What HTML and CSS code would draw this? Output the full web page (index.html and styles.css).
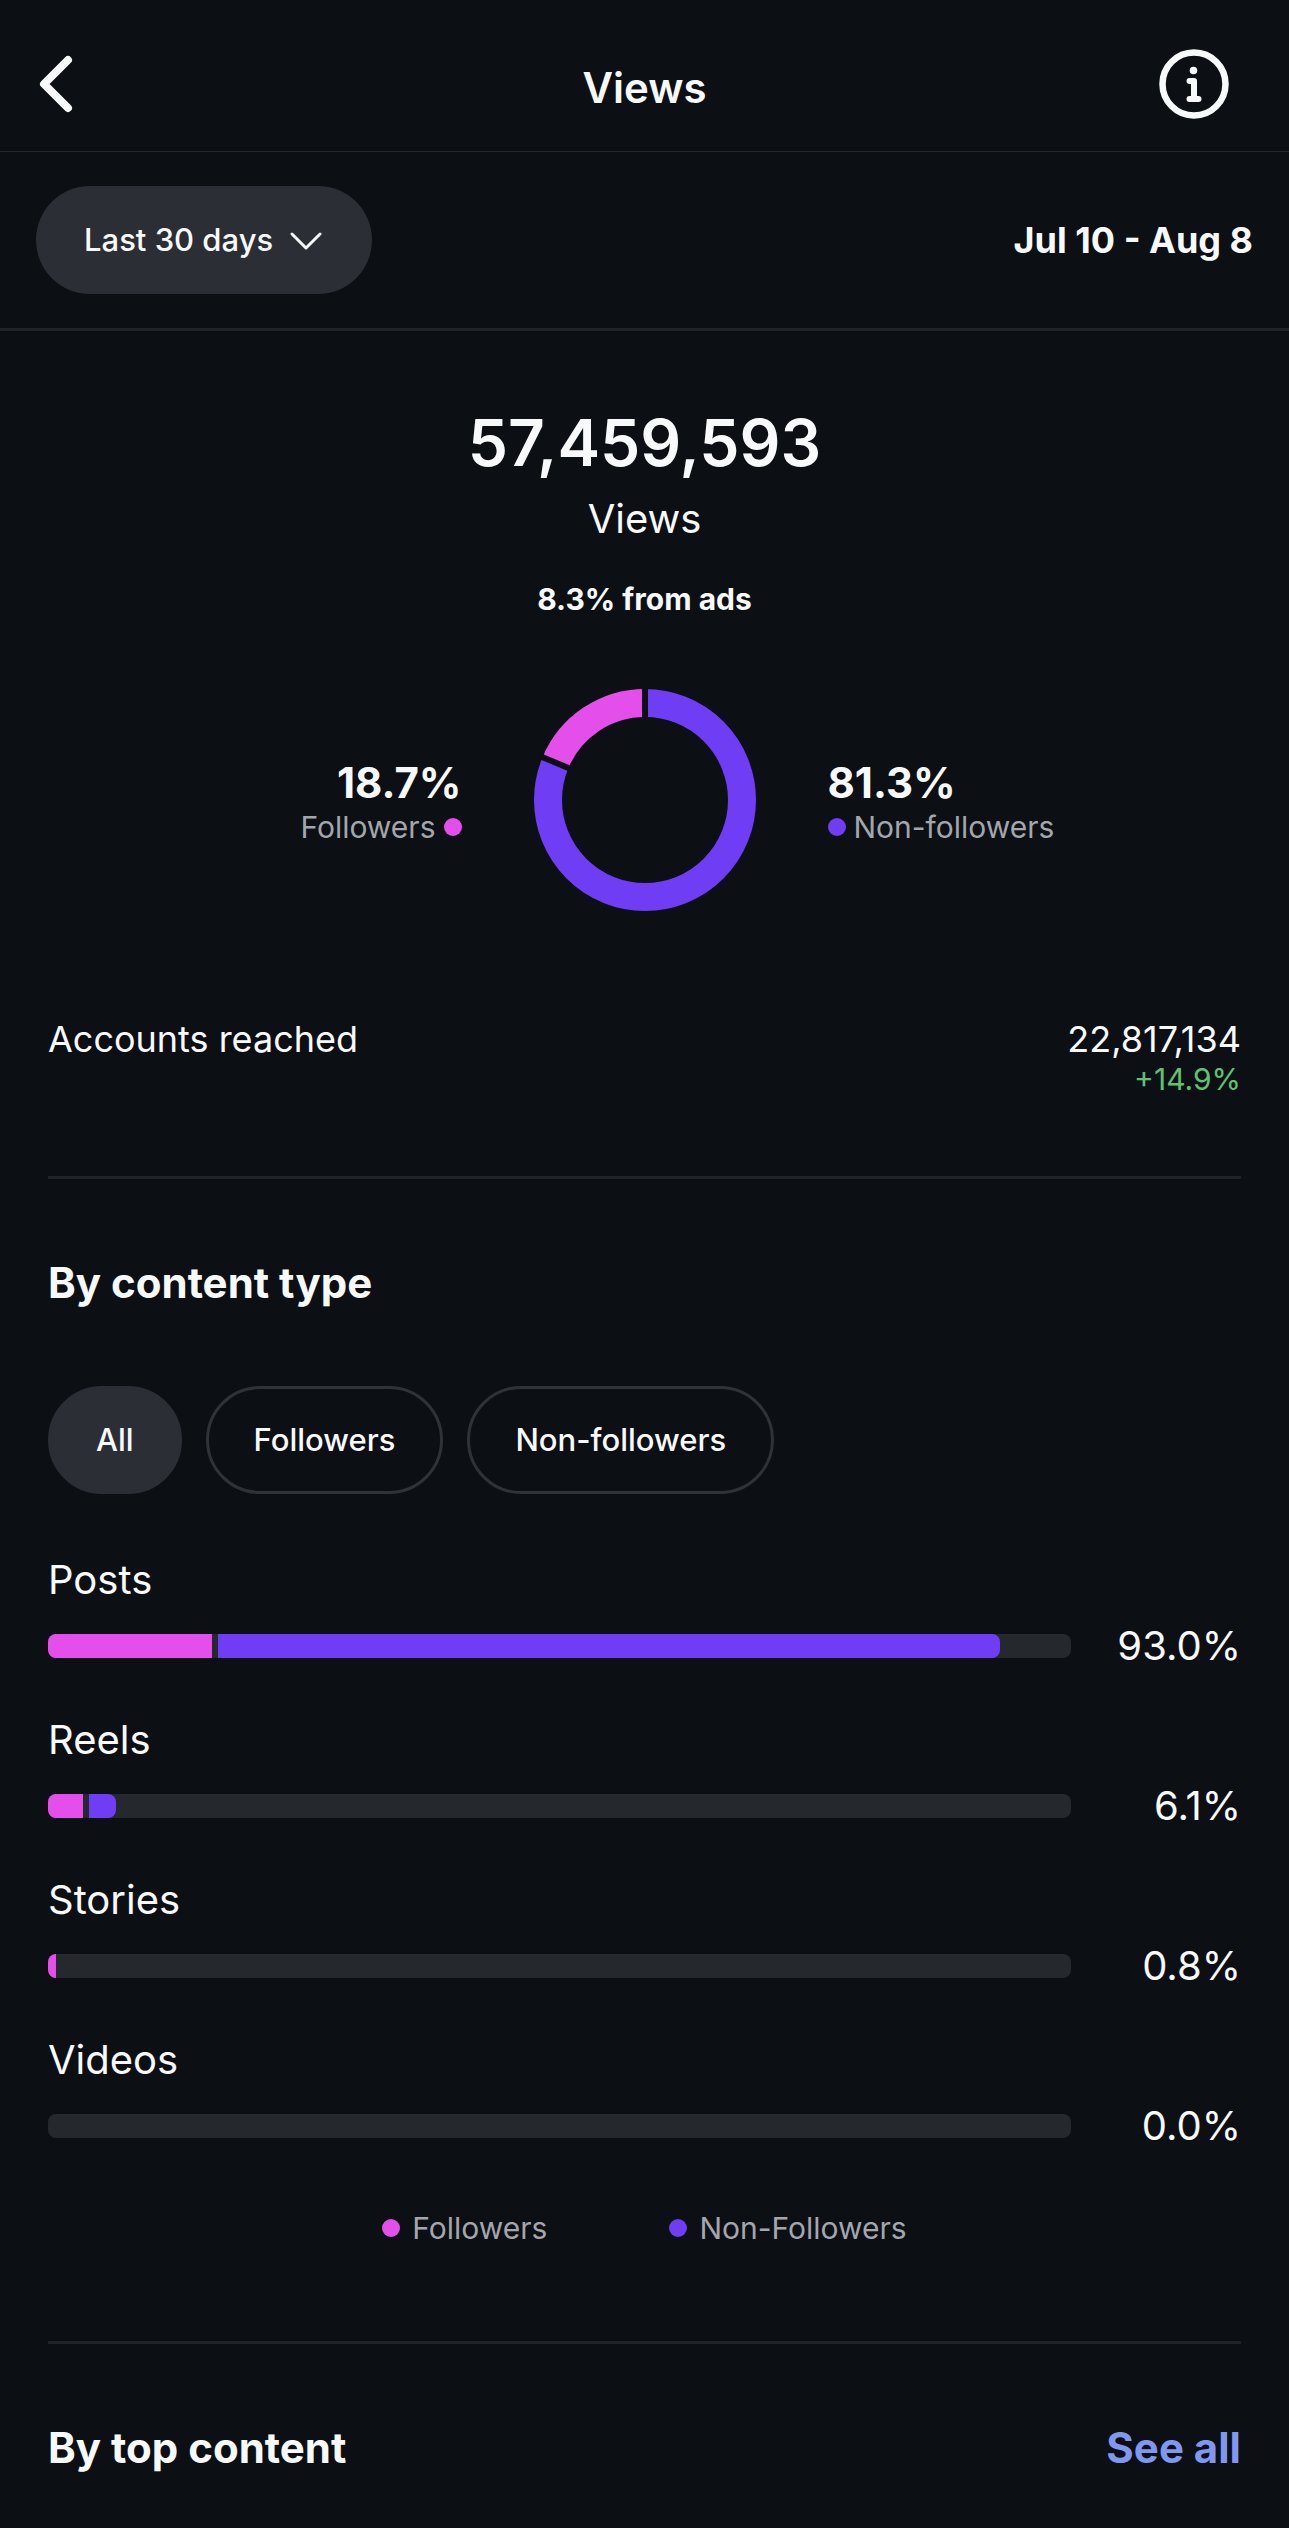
FILE: index.html
```html
<!DOCTYPE html>
<html lang="en">
<head>
  <meta charset="UTF-8">
  <title>Views</title>
  <meta name="viewport" content="width=device-width, initial-scale=1">
  <link rel="stylesheet" href="styles.css">
</head>
<body>
  <header class="topbar">
    <button class="icon-btn back" aria-label="Back">
      <svg width="34" height="58" viewBox="0 0 34 58" fill="none" stroke="currentColor" stroke-width="8" stroke-linecap="round" stroke-linejoin="round"><path d="M29 5 5 29l24 24"/></svg>
    </button>
    <h1>Views</h1>
    <button class="icon-btn info" aria-label="Info">
      <svg width="70" height="70" viewBox="0 0 70 70" fill="none" stroke="currentColor" stroke-linecap="round" stroke-linejoin="round">
        <circle cx="35" cy="35" r="31.5" stroke-width="6.5"/>
        <circle cx="34.500" cy="21.500" r="3.800" fill="currentColor" stroke="none"/>
        <path d="M30.500 32H35v18M30.500 50h9" stroke-width="6"/>
      </svg>
    </button>
  </header>

  <div class="filters">
    <div class="period">
      <select aria-label="Period">
        <option>Last 30 days</option>
        <option>Last 7 days</option>
      </select>
      <svg class="chevron" width="32" height="18" viewBox="0 0 32 18" fill="none" stroke="currentColor" stroke-width="3" stroke-linecap="round" stroke-linejoin="round"><path d="m2 2 14 14L30 2"/></svg>
    </div>
    <p class="range">Jul 10 - Aug 8</p>
  </div>

  <main>
    <section class="summary">
      <p class="total">57,459,593</p>
      <p class="total-label">Views</p>
      <p class="ads">8.3% from ads</p>

      <div class="split">
        <div class="share share-left">
          <p class="share-value">18.7%</p>
          <p class="share-label">Followers <span class="dot pink"></span></p>
        </div>
        <!-- ring is 100 units long, followers take the last 18.7 -->
        <svg class="donut" width="222" height="222" viewBox="0 0 222 222" fill="none">
          <g transform="rotate(-90 111 111)" stroke-width="28">
            <circle cx="111" cy="111" r="97" stroke="#6f3df4" pathLength="100" stroke-dasharray="81.3 100"/>
            <circle cx="111" cy="111" r="97" stroke="#e44eea" pathLength="100" stroke-dasharray="18.7 100" stroke-dashoffset="-81.3"/>
          </g>
          <g stroke="#0c0f14">
            <path d="M111 111V-2" stroke-width="6"/>
            <path d="M111 111V-2" stroke-width="6" transform="rotate(-67.300 111 111)"/>
          </g>
        </svg>
        <div class="share">
          <p class="share-value">81.3%</p>
          <p class="share-label"><span class="dot purple"></span> Non-followers</p>
        </div>
      </div>

      <div class="reached">
        <p>Accounts reached</p>
        <div class="reached-value">
          <p>22,817,134</p>
          <p class="growth">+14.9%</p>
        </div>
      </div>
    </section>

    <section class="content-type">
      <h2>By content type</h2>
      <div class="chips">
        <button class="chip active">All</button>
        <button class="chip">Followers</button>
        <button class="chip">Non-followers</button>
      </div>

      <ul class="bars">
        <li>
          <h3>Posts</h3>
          <div class="bar-row">
            <div class="bar">
              <span class="pink" style="width: 16%"></span>
              <span class="purple" style="width: 76.5%"></span>
            </div>
            <p>93.0%</p>
          </div>
        </li>
        <li>
          <h3>Reels</h3>
          <div class="bar-row">
            <div class="bar">
              <span class="pink" style="width: 3.4%"></span>
              <span class="purple" style="width: 2.7%"></span>
            </div>
            <p>6.1%</p>
          </div>
        </li>
        <li>
          <h3>Stories</h3>
          <div class="bar-row">
            <div class="bar">
              <span class="pink" style="width: 0.8%"></span>
            </div>
            <p>0.8%</p>
          </div>
        </li>
        <li>
          <h3>Videos</h3>
          <div class="bar-row">
            <div class="bar"></div>
            <p>0.0%</p>
          </div>
        </li>
      </ul>

      <div class="legend">
        <p><span class="dot pink"></span>Followers</p>
        <p><span class="dot purple"></span>Non-Followers</p>
      </div>
    </section>

    <section class="top-content">
      <h2>By top content</h2>
      <a href="#">See all</a>
    </section>
  </main>
</body>
</html>
```
FILE: styles.css
```css
* {
  box-sizing: border-box;
}
body {
  margin: 0;
  background: #0c0f14;
  color: #f8f9fb;
  font-family: Inter, "Liberation Sans", sans-serif;
  font-size: 30px;
  line-height: 40px;
}
h1, h2, h3, p, ul {
  margin: 0;
  padding: 0;
}
h1, h2 {
  font-size: 42px;
  font-weight: 600;
  line-height: 52px;
}
h2 {
  font-weight: 700;
}
button, select {
  color: inherit;
  font: inherit;
  border: none;
  cursor: pointer;
}
.pink {
  background: #e44eea;
}
.purple {
  background: #6f3df4;
}

/* header */
.topbar {
  display: grid;
  grid-template-columns: 1fr auto 1fr;
  align-items: center;
  height: 152px;
  padding: 20px 60px 4px 36px;
  border-bottom: 1px solid #24272c;
}
.topbar h1 {
  grid-column: 2;
  padding-left: 24px;
  padding-top: 8px;
}
.icon-btn {
  display: flex;
  padding: 0;
  background: none;
}
.back {
  padding-left: 3px;
  justify-self: start;
}
.info {
  justify-self: end;
}
.filters {
  display: flex;
  align-items: center;
  justify-content: space-between;
  padding: 34px 36px;
  border-bottom: 3px solid #202329;
}
.period {
  position: relative;
}
.period select {
  appearance: none;
  height: 108px;
  padding: 0 98px 0 48px;
  border-radius: 54px;
  background: #2c2e35;
  font-size: 31px;
  font-weight: 500;
}
.chevron {
  position: absolute;
  right: 50px;
  top: 46px;
  pointer-events: none;
}
.range {
  font-size: 36px;
  font-weight: 700;
}

/* summary */
main {
  padding: 0 48px;
}
.summary {
  padding: 72px 0 79px;
  border-bottom: 3px solid #202329;
  text-align: center;
}
.total {
  font-size: 64px;
  font-weight: 600;
  line-height: 80px;
}
.total-label {
  font-size: 40px;
  line-height: 72px;
}
.ads {
  padding-top: 24px;
  font-weight: 700;
}
.split {
  display: grid;
  grid-template-columns: 1fr 222px 1fr;
  align-items: center;
  gap: 72px;
  padding: 70px 0 106px;
}
.share {
  padding-top: 6px;
  text-align: left;
}
.share-left {
  text-align: right;
}
.share-value {
  font-size: 42px;
  font-weight: 700;
  line-height: 48px;
}
.share-label {
  display: flex;
  align-items: center;
  gap: 8px;
  color: #a3a6ad;
}
.share-left .share-label {
  justify-content: flex-end;
}
.dot {
  width: 18px;
  height: 18px;
  border-radius: 50%;
}
.reached {
  display: flex;
  justify-content: space-between;
  font-size: 36px;
  line-height: 44px;
}
.reached-value {
  text-align: right;
}
.growth {
  color: #5fc272;
  font-size: 30px;
  line-height: 36px;
}

/* content type */
.content-type {
  padding: 78px 0 93px;
  border-bottom: 3px solid #202329;
}
.chips {
  display: flex;
  gap: 24px;
  padding: 77px 0 60px;
}
.chip {
  height: 108px;
  padding: 0 45px;
  border: 3px solid #303238;
  border-radius: 54px;
  background: none;
  font-size: 31px;
  font-weight: 500;
}
.chip.active {
  background: #2c2e35;
  border-color: #2c2e35;
}
.bars {
  list-style: none;
}
.bars li {
  height: 160px;
}
.bars h3 {
  font-size: 40px;
  font-weight: 400;
  line-height: 52px;
}
.bar-row {
  display: flex;
  align-items: center;
  padding-top: 14px;
}
.bar-row p {
  width: 170px;
  font-size: 40px;
  line-height: 52px;
  text-align: right;
}
.bar {
  flex: 1;
  display: flex;
  gap: 6px;
  height: 24px;
  border-radius: 8px;
  background: #25282d;
  overflow: hidden;
}
.bar .purple {
  border-radius: 0 8px 8px 0;
}
.legend {
  display: flex;
  justify-content: center;
  gap: 122px;
  padding-top: 14px;
  color: #a3a6ad;
}
.legend p {
  display: flex;
  align-items: center;
  gap: 12px;
}

.top-content {
  display: flex;
  justify-content: space-between;
  padding: 78px 0 50px;
}
.top-content a {
  color: #8097f0;
  font-size: 42px;
  font-weight: 700;
  line-height: 52px;
  text-decoration: none;
}
```
